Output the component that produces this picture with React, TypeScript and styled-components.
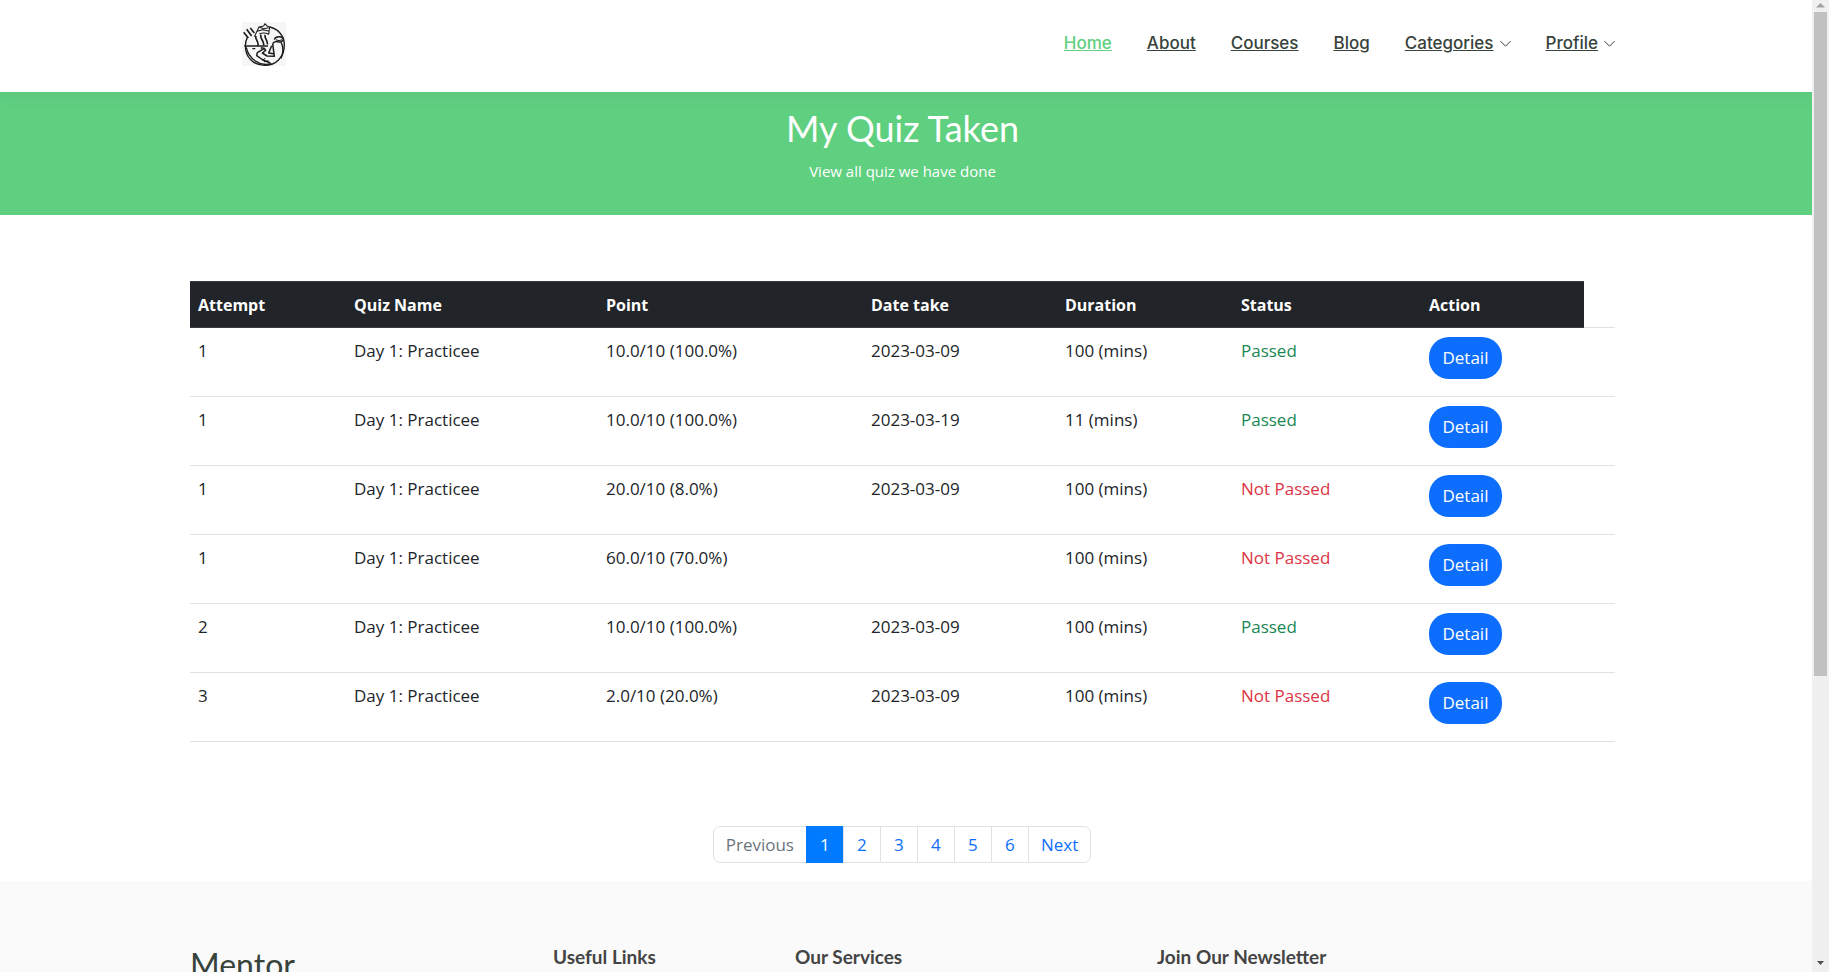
import React from 'react';
import styled, { createGlobalStyle } from 'styled-components';

const textFont = '"Open Sans", "Noto Sans", sans-serif';
const headingFont = 'Lato, "Open Sans", sans-serif';
const navFont = 'Inter, "Open Sans", sans-serif';

const GlobalStyle = createGlobalStyle`
  *, *::before, *::after { box-sizing: border-box; }
  body {
    margin: 0;
    font-family: ${textFont};
    font-size: 17px;
    line-height: 24px;
    color: #212529;
    background: #fff;
  }
  h1, h2, h3, h4, p, ul { margin: 0; padding: 0; }
  ul { list-style: none; }
`;

const Shell = styled.div`
  display: flex;
  height: 100vh;
`;

const Page = styled.div`
  flex: 1;
  min-width: 0;
  overflow-y: auto;
  scrollbar-width: none;
`;

const Band = styled.div`
  padding: 0 31px 0 24px;
`;

const Container = styled.div`
  max-width: 1425px;
  margin: 0 auto;
`;

const Header = styled.header`
  position: relative;
  z-index: 1;
  background: #fff;
  box-shadow: 0 0 18px rgba(55, 66, 59, 0.1);
`;

const HeaderRow = styled(Container)`
  display: flex;
  align-items: center;
  justify-content: space-between;
  height: 92px;
  padding: 0 0 4px 52px;
`;

const LogoLink = styled.a`
  display: block;
  height: 44px;
`;

const NavList = styled.ul`
  display: flex;
  gap: 35px;
  padding-bottom: 2px;
`;

const NavLink = styled.a<{ $active?: boolean }>`
  display: flex;
  align-items: center;
  gap: 6px;
  font: 500 17px/24px ${navFont};
  color: ${(p) => (p.$active ? '#5fcf80' : '#37423b')};
`;

const Hero = styled.section`
  padding: 14px 7px 31px 0;
  background: #5fcf80;
  color: #fff;
  text-align: center;
`;

const HeroTitle = styled.h1`
  font: 400 36px/44px ${headingFont};
`;

const HeroText = styled.p`
  margin-top: 8px;
  font-size: 15px;
  line-height: 26px;
`;

const Content = styled.main`
  padding: 66px 0 18px;
`;

const QuizTable = styled.table`
  width: 100%;
  table-layout: fixed;
  border-collapse: collapse;
`;

const HeadCell = styled.th`
  height: 46px;
  padding: 0 8px;
  background: #212529;
  border: solid #373b3e;
  border-width: 1px 0;
  color: #fff;
  font-size: 16px;
  font-weight: 700;
  text-align: left;
`;

const HeadGap = styled.td`
  border-bottom: 1px solid #dee2e6;
`;

const Cell = styled.td<{ $tone?: 'passed' | 'failed' }>`
  height: 69px;
  padding: 11px 8px 0;
  border-bottom: 1px solid #dee2e6;
  vertical-align: top;
  color: ${(p) => (p.$tone === 'passed' ? '#198754' : p.$tone === 'failed' ? '#dc3545' : '#212529')};
`;

const ActionCell = styled(Cell)`
  padding-top: 9px;
`;

const DetailButton = styled.button`
  display: block;
  width: 73px;
  height: 42px;
  padding: 0;
  border: 0;
  border-radius: 20px;
  background: #0d6efd;
  color: #fff;
  font: 400 17px/24px ${textFont};
`;

const Pagination = styled.nav`
  display: flex;
  justify-content: center;
  margin-top: 84px;
`;

const PageList = styled.ul`
  display: flex;
  height: 37px;
`;

const PageButton = styled.button<{ $active?: boolean }>`
  min-width: 38px;
  height: 37px;
  margin-left: -1px;
  padding: 0 12px;
  border: 1px solid ${(p) => (p.$active ? '#007bff' : '#dee2e6')};
  background: ${(p) => (p.$active ? '#007bff' : '#fff')};
  color: ${(p) => (p.$active ? '#fff' : '#0d6efd')};
  font: 400 17px/24px ${textFont};

  &:disabled { color: #6c757d; }
  li:first-child > & { border-radius: 7px 0 0 7px; }
  li:last-child > & { border-radius: 0 7px 7px 0; }
`;

const Footer = styled.footer`
  padding: 60px 0;
  background: #fafafa;
`;

const FooterGrid = styled(Container)`
  display: grid;
  grid-template-columns: 363fr 242fr 362fr 458fr;
`;

const FooterBrand = styled.h3`
  font: 400 32px/48px ${headingFont};
  color: #37423b;
`;

const FooterTitle = styled.h4`
  padding-top: 4px;
  font: 700 19px/24px ${headingFont};
  color: #444;
`;

const ScrollTrack = styled.div`
  display: flex;
  flex-direction: column;
  align-items: center;
  flex: 0 0 17px;
  height: 100%;
  padding: 3px 0;
  background: #f0f0f0;
`;

const ScrollThumb = styled.div`
  flex: 7;
  width: 13px;
  margin-top: 4px;
  background: #c1c1c1;
`;

const ScrollSpace = styled.div`
  flex: 3;
`;

const Arrow = () => (
  <svg width="11" height="11" viewBox="0 0 11 11" fill="none" stroke="currentColor" aria-hidden="true">
    <path d="M.5 3.2 5.5 8.2 10.5 3.2" />
  </svg>
);

const Logo = () => (
  <svg width="44" height="44" viewBox="35 35 132 132" fill="none" stroke="#1c1c1c" strokeWidth="3.2" strokeLinejoin="round" aria-hidden="true">
    <path fill="#f6f6f6" stroke="none" d="M35 35h132v132H35z" />
    <path strokeWidth="4" d="M118 50C145 56 162 78 162 104c0 36-25 61-59 61-34 0-58-25-58-59 0-10 3-19 7-27" />
    <path strokeWidth="5" d="m40 66 14 17M49 57l15 20M60 53l12 15" />
    <path d="M72 79 86 50l14-3 4-7 5 6 9 4-3 22c-9-5-18-5-28-2M86 50l14 5 15-3M81 63l15-5 19 4" />
    <path strokeWidth="5" d="M42 107h44M77 77c-4 10 8 14 6 28M92 73c-5 12 10 17 8 32M105 74c-5 9 8 14 6 28" />
    <path strokeWidth="4" d="M86 107h27M48 111c3 17 12 30 27 41 16 11 34 12 48 8M66 115h9M91 113h9" />
    <path strokeWidth="4.5" d="M132 88c3-11 24-12 27-2 1 8-9 10-17 8-7-2-12 1-15 6M127 100l5 38-22-1-14-9 10-8-4-6-21 13-2 9 19 13 22 9M152 95c8 16 8 32 0 49M124 106l-9 22 15 2" />
    <path d="m137 88 9 3 9-3M95 150l10-6M101 154l14-3" />
  </svg>
);

const navItems = [
  { label: 'Home', active: true },
  { label: 'About' },
  { label: 'Courses' },
  { label: 'Blog' },
  { label: 'Categories', menu: true },
  { label: 'Profile', menu: true },
];

const columns = [
  { label: 'Attempt', width: 156 },
  { label: 'Quiz Name', width: 252 },
  { label: 'Point', width: 265 },
  { label: 'Date take', width: 194 },
  { label: 'Duration', width: 176 },
  { label: 'Status', width: 188 },
  { label: 'Action', width: 163 },
];
const tableUnits = 1425;

const Col = styled.col<{ $units: number }>`
  width: ${(p) => (p.$units / tableUnits) * 100}%;
`;

const attempts = [
  { attempt: 1, point: '10.0/10 (100.0%)', date: '2023-03-09', duration: 100, passed: true },
  { attempt: 1, point: '10.0/10 (100.0%)', date: '2023-03-19', duration: 11, passed: true },
  { attempt: 1, point: '20.0/10 (8.0%)', date: '2023-03-09', duration: 100, passed: false },
  { attempt: 1, point: '60.0/10 (70.0%)', date: '', duration: 100, passed: false },
  { attempt: 2, point: '10.0/10 (100.0%)', date: '2023-03-09', duration: 100, passed: true },
  { attempt: 3, point: '2.0/10 (20.0%)', date: '2023-03-09', duration: 100, passed: false },
];

export default function App() {
  return (
    <>
      <GlobalStyle />
      <Shell>
        <Page>
          <Header>
            <Band>
              <HeaderRow>
                <LogoLink href="#" aria-label="Mentor"><Logo /></LogoLink>
                <nav>
                  <NavList>
                    {navItems.map((item) => (
                      <li key={item.label}>
                        <NavLink href="#" $active={item.active}>
                          <span>{item.label}</span>
                          {item.menu && <Arrow />}
                        </NavLink>
                      </li>
                    ))}
                  </NavList>
                </nav>
              </HeaderRow>
            </Band>
          </Header>

          <Hero>
            <HeroTitle>My Quiz Taken</HeroTitle>
            <HeroText>View all quiz we have done</HeroText>
          </Hero>

          <Content>
            <Band>
              <Container>
                <QuizTable>
                  <colgroup>
                    {columns.map((c) => <Col key={c.label} $units={c.width} />)}
                    <Col $units={31} />
                  </colgroup>
                  <thead>
                    <tr>
                      {columns.map((c) => <HeadCell key={c.label} scope="col">{c.label}</HeadCell>)}
                      <HeadGap />
                    </tr>
                  </thead>
                  <tbody>
                    {attempts.map((row, i) => (
                      <tr key={i}>
                        <Cell>{row.attempt}</Cell>
                        <Cell>Day 1: Practicee</Cell>
                        <Cell>{row.point}</Cell>
                        <Cell>{row.date}</Cell>
                        <Cell>{row.duration} (mins)</Cell>
                        <Cell $tone={row.passed ? 'passed' : 'failed'}>{row.passed ? 'Passed' : 'Not Passed'}</Cell>
                        <ActionCell><DetailButton type="button">Detail</DetailButton></ActionCell>
                        <Cell />
                      </tr>
                    ))}
                  </tbody>
                </QuizTable>
                <Pagination>
                  <PageList>
                    <li><PageButton type="button" disabled>Previous</PageButton></li>
                    {[1, 2, 3, 4, 5, 6].map((n) => (
                      <li key={n}><PageButton type="button" $active={n === 1}>{n}</PageButton></li>
                    ))}
                    <li><PageButton type="button">Next</PageButton></li>
                  </PageList>
                </Pagination>
              </Container>
            </Band>
          </Content>

          <Footer>
            <Band>
              <FooterGrid>
                <FooterBrand>Mentor</FooterBrand>
                <FooterTitle>Useful Links</FooterTitle>
                <FooterTitle>Our Services</FooterTitle>
                <FooterTitle>Join Our Newsletter</FooterTitle>
              </FooterGrid>
            </Band>
          </Footer>
        </Page>

        <ScrollTrack aria-hidden="true">
          <svg width="9" height="5" viewBox="0 0 9 5"><path fill="#a3a3a3" d="M4.5 0 9 4.5H0z" /></svg>
          <ScrollThumb />
          <ScrollSpace />
          <svg width="9" height="9" viewBox="0 0 9 9"><path fill="#505050" d="M1 1h7L4.5 5z" /></svg>
        </ScrollTrack>
      </Shell>
    </>
  );
}
